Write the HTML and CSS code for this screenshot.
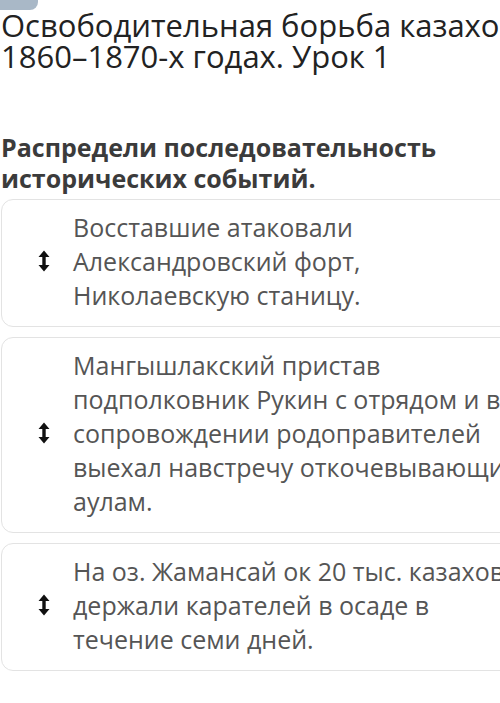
FILE: index.html
```html
<!DOCTYPE html>
<html lang="ru">
  <head>
    <meta charset="UTF-8" />
    <meta name="viewport" content="width=device-width, initial-scale=1.0" />
    <title>Урок 1</title>
    <link rel="stylesheet" href="styles.css">
  </head>
  <body>
    <div class="page">
      <div class="tab"></div>

      <h1 class="lesson-title">Освободительная борьба казахов в 1860–1870-х годах. Урок 1</h1>

      <h2 class="task">Распредели последовательность исторических событий.</h2>

      <div class="order-list">
        <div class="order-item">
          <span class="handle">
            <svg width="12" height="22" viewBox="0 0 12 22">
              <path d="M6 0.5 L11.5 7 L7.7 7 L7.7 15 L11.5 15 L6 21.5 L0.5 15 L4.3 15 L4.3 7 L0.5 7 Z" fill="#111" />
            </svg>
          </span>
          <p class="item-text">Восставшие атаковали<br>Александровский форт,<br>Николаевскую станицу.</p>
        </div>

        <div class="order-item">
          <span class="handle">
            <svg width="12" height="22" viewBox="0 0 12 22">
              <path d="M6 0.5 L11.5 7 L7.7 7 L7.7 15 L11.5 15 L6 21.5 L0.5 15 L4.3 15 L4.3 7 L0.5 7 Z" fill="#111" />
            </svg>
          </span>
          <p class="item-text">Мангышлакский пристав<br>подполковник Рукин с отрядом и в<br>сопровождении родоправителей<br>выехал навстречу откочевывающим<br>аулам.</p>
        </div>

        <div class="order-item">
          <span class="handle">
            <svg width="12" height="22" viewBox="0 0 12 22">
              <path d="M6 0.5 L11.5 7 L7.7 7 L7.7 15 L11.5 15 L6 21.5 L0.5 15 L4.3 15 L4.3 7 L0.5 7 Z" fill="#111" />
            </svg>
          </span>
          <p class="item-text">На оз. Жамансай ок 20 тыс. казахов<br>держали карателей в осаде в<br>течение семи дней.</p>
        </div>
      </div>
    </div>
  </body>
</html>
```

FILE: styles.css
```css
html,
body {
  margin: 0;
  background-color: #fff;
  overflow: hidden;
}

body {
  font-family: "Open Sans", "Noto Sans", sans-serif;
}

.page {
  width: 580px;
  padding-left: 1px;
}

.tab {
  width: 38px;
  height: 10px;
  margin-left: -1px;
  border-bottom-right-radius: 8px;
  background-color: #a9b8c7;
}

.lesson-title {
  margin: 0;
  font-size: 31px;
  font-weight: 400;
  line-height: 31px;
  color: #222;
}

.task {
  margin: 60px 0 0;
  font-size: 25px;
  font-weight: 700;
  line-height: 31px;
  color: #3b3b3b;
}

.order-list {
  display: flex;
  flex-direction: column;
  gap: 10px;
  margin-top: 5px;
}

.order-item {
  display: flex;
  align-items: center;
  gap: 23px;
  padding: 10px 0 14px 36px;
  border: 1px solid #e3e3e3;
  border-radius: 12px;
}

.handle {
  display: flex;
  flex-shrink: 0;
  width: 12px;
}

.item-text {
  margin: 0;
  white-space: nowrap;
  font-size: 25px;
  line-height: 34px;
  color: #555;
}
```
